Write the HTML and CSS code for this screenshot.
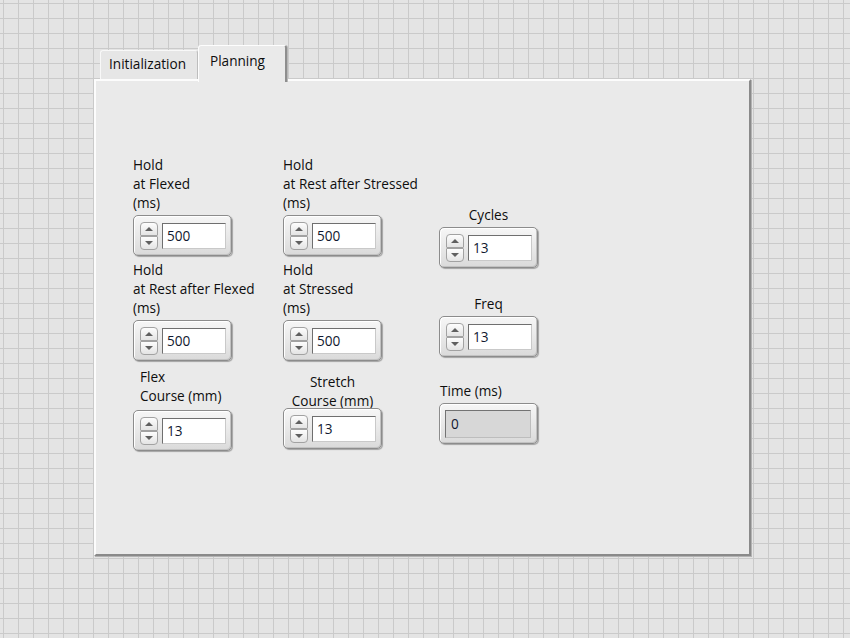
FILE: index.html
```html
<!DOCTYPE html>
<html>
<head>
<meta charset="utf-8">
<link rel="stylesheet" href="styles.css">
</head>
<body>
<div class="front">
  <div class="tabs">
    <div class="tab">Initialization</div>
    <div class="tab tab-active">Planning</div>
  </div>
  <div class="panel">
    <div class="col col1">
      <div class="ctl">
        <div class="lbl lbl3">Hold<br>at Flexed<br>(ms)</div>
        <div class="num"><div class="spin"><span class="up"></span><span class="dn"></span></div><div class="field">500</div></div>
      </div>
      <div class="ctl ctl-r2">
        <div class="lbl lbl3">Hold<br>at Rest after Flexed<br>(ms)</div>
        <div class="num"><div class="spin"><span class="up"></span><span class="dn"></span></div><div class="field">500</div></div>
      </div>
      <div class="ctl ctl-flex">
        <div class="lbl lbl-flex">Flex<br>Course (mm)</div>
        <div class="num"><div class="spin"><span class="up"></span><span class="dn"></span></div><div class="field">13</div></div>
      </div>
    </div>
    <div class="col col2">
      <div class="ctl">
        <div class="lbl lbl3">Hold<br>at Rest after Stressed<br>(ms)</div>
        <div class="num"><div class="spin"><span class="up"></span><span class="dn"></span></div><div class="field">500</div></div>
      </div>
      <div class="ctl ctl-r2">
        <div class="lbl lbl3">Hold<br>at Stressed<br>(ms)</div>
        <div class="num"><div class="spin"><span class="up"></span><span class="dn"></span></div><div class="field">500</div></div>
      </div>
      <div class="ctl ctl-stretch">
        <div class="lbl lbl-stretch">Stretch<br>Course (mm)</div>
        <div class="num"><div class="spin"><span class="up"></span><span class="dn"></span></div><div class="field">13</div></div>
      </div>
    </div>
    <div class="col col3">
      <div class="ctl">
        <div class="lbl lbl-c">Cycles</div>
        <div class="num"><div class="spin"><span class="up"></span><span class="dn"></span></div><div class="field">13</div></div>
      </div>
      <div class="ctl ctl-freq">
        <div class="lbl lbl-c">Freq</div>
        <div class="num"><div class="spin"><span class="up"></span><span class="dn"></span></div><div class="field">13</div></div>
      </div>
      <div class="ctl ctl-time">
        <div class="lbl lbl-time">Time (ms)</div>
        <div class="num ind"><div class="ifield">0</div></div>
      </div>
    </div>
  </div>
</div>
</body>
</html>
```
FILE: styles.css
```css
html, body {
  margin: 0;
  padding: 0;
}
body {
  width: 850px;
  height: 638px;
  overflow: hidden;
  background-color: #e4e4e4;
  background-image:
    linear-gradient(to right, #cacaca 1px, transparent 1px),
    linear-gradient(to bottom, #cacaca 1px, transparent 1px);
  background-size: 15px 15px;
  background-position: 3px 3px;
  font-family: "Open Sans", "Noto Sans", sans-serif;
  font-size: 13.6px;
  color: #0e0e0e;
}
.front {
  padding: 45px 0 0 94px;
  width: 657px;
}
.tabs {
  display: flex;
  align-items: flex-end;
  height: 34px;
  padding-left: 6px;
  position: relative;
  z-index: 2;
}
.tab {
  box-sizing: border-box;
  height: 29px;
  width: 98px;
  padding: 3px 0 0 8px;
  background: #e6e6e6;
  border-top: 1px solid #f8f8f8;
  border-left: 1px solid #f8f8f8;
  border-right: 1px solid #bdbdbd;
  border-radius: 3px 3px 0 0;
  line-height: 19px;
  white-space: nowrap;
}
.tab-active {
  height: 37px;
  width: 89px;
  margin-bottom: -3px;
  padding: 5px 0 0 11px;
  background: #eaeaea;
  border-top: 1px solid #fdfdfd;
  border-left: 1px solid #fdfdfd;
  border-right: 2px solid #8e8e8e;
  box-shadow: 1px 0 0 #b8b8b8;
}
.panel {
  box-sizing: border-box;
  width: 657px;
  height: 477px;
  background: #eaeaea;
  border-top: 2px solid #fcfcfc;
  border-left: 2px solid #fcfcfc;
  border-right: 2px solid #8a8a8a;
  border-bottom: 2px solid #8a8a8a;
  box-shadow: 1px 1px 0 #b2b2b2;
  display: grid;
  grid-template-columns: 150px 156px 99px;
  align-items: start;
  padding: 74px 0 0 37px;
}
.col {
  display: flex;
  flex-direction: column;
  width: 99px;
}
.col3 {
  margin-top: 50px;
}
.lbl {
  line-height: 19px;
  white-space: nowrap;
  margin-bottom: 3px;
}
.ctl-r2 { margin-top: 4px; }
.ctl-flex { margin-top: 6px; }
.lbl-flex { padding-left: 7px; margin-bottom: 5px; }
.ctl-stretch { margin-top: 11px; }
.lbl-stretch { text-align: center; margin-bottom: -2px; }
.lbl-c { text-align: center; margin-bottom: 3px; }
.ctl-freq { margin-top: 26px; }
.ctl-time { margin-top: 24px; }
.lbl-time { padding-left: 1px; margin-bottom: 3px; }

.num {
  position: relative;
  z-index: 1;
  box-sizing: border-box;
  width: 99px;
  height: 41px;
  border: 1px solid #8c8c8c;
  border-radius: 5px;
  background: linear-gradient(#f6f6f6, #e6e6e6 60%, #dadada);
  box-shadow: inset 1px 1px 0 #ffffff, inset -1px -1px 0 #c2c2c2, 1px 1px 1px rgba(0,0,0,0.3);
  display: flex;
  align-items: center;
  padding: 0 5px 0 6px;
  gap: 4px;
}
.spin {
  display: flex;
  flex-direction: column;
  width: 18px;
  height: 28px;
}
.spin span {
  box-sizing: border-box;
  position: relative;
  flex: 1;
  border: 1px solid #a2a2a2;
  background: linear-gradient(#fdfdfd, #e4e4e4);
}
.spin .up { border-radius: 4px 4px 1px 1px; }
.spin .dn { border-radius: 1px 1px 4px 4px; }
.spin span::after {
  content: "";
  position: absolute;
  left: 4px;
  width: 0;
  height: 0;
  border-left: 4px solid transparent;
  border-right: 4px solid transparent;
}
.spin .up::after {
  top: 4px;
  border-bottom: 4px solid #606060;
}
.spin .dn::after {
  top: 4px;
  border-top: 4px solid #606060;
}
.field {
  box-sizing: border-box;
  width: 64px;
  height: 26px;
  background: #ffffff;
  border-top: 1px solid #6f6f6f;
  border-left: 1px solid #6f6f6f;
  border-right: 1px solid #c9c9c9;
  border-bottom: 1px solid #c9c9c9;
  padding: 3px 0 0 4px;
  line-height: 18px;
  color: #101830;
}
.ind {
  padding: 0 5px 0 5px;
}
.ifield {
  box-sizing: border-box;
  width: 86px;
  height: 28px;
  background: #d7d7d7;
  border-top: 1px solid #737373;
  border-left: 1px solid #737373;
  border-right: 1px solid #bdbdbd;
  border-bottom: 1px solid #bdbdbd;
  padding: 4px 0 0 5px;
  line-height: 18px;
  color: #101830;
}
```
